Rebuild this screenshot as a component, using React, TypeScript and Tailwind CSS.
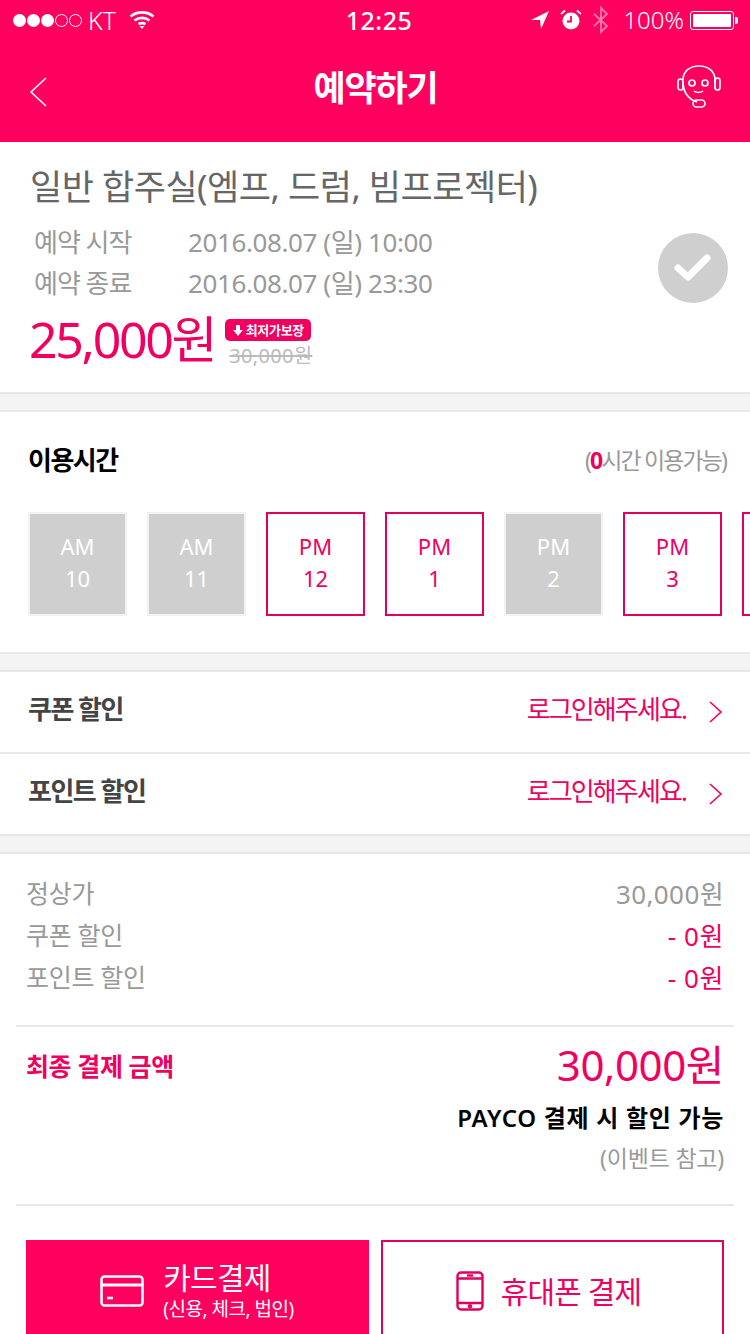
const slots = [
  { top: "AM", num: "10", on: false },
  { top: "AM", num: "11", on: false },
  { top: "PM", num: "12", on: true },
  { top: "PM", num: "1", on: true },
  { top: "PM", num: "2", on: false },
  { top: "PM", num: "3", on: true },
  { top: "", num: "", on: true },
];

const Divider = () => (
  <div className="h-[20px] shrink-0 bg-[#f4f4f4] border-y-2 border-[#e8e8e8]" />
);

const DiscountRow = ({ label }: { label: string }) => (
  <div className="flex h-[80px] items-center justify-between pl-[28px] pr-[27px]">
    <span className="mb-[5px] text-[26px] font-bold tracking-[-1.5px] text-[#444]">{label}</span>
    <div className="flex items-center gap-[22px]">
      <span className="mb-[5px] text-[26px] tracking-[-1.9px] text-[#f0005f]">로그인해주세요.</span>
      <svg width="15" height="22" viewBox="0 0 15 22" fill="none" stroke="#f0005f" strokeWidth="1.6">
        <path d="M2 1L13 11L2 21" />
      </svg>
    </div>
  </div>
);

const PriceRow = ({ label, value, pink }: { label: string; value: string; pink?: boolean }) => (
  <div className="flex h-[42px] items-center justify-between">
    <span className="text-[25px] tracking-[-0.3px] text-[#999]">{label}</span>
    <span className={pink ? "text-[26px] tracking-[0.6px] text-[#f0005f]" : "text-[26px] tracking-[0.4px] text-[#999]"}>{value}</span>
  </div>
);

export default function App() {
  return (
    <div
      className="h-[1334px] w-[750px] overflow-hidden bg-white"
      style={{ fontFamily: '"Noto Sans", "Noto Sans CJK KR", sans-serif' }}
    >
      {/* Header */}
      <div className="h-[142px] bg-[#ff005f] text-white">
        <div className="flex h-[40px] items-center justify-between pl-[13px] pr-[9px]">
          <div className="flex w-[300px] items-center">
            <div className="flex items-center gap-[1px]">
              <span className="size-[13px] rounded-full bg-white" />
              <span className="size-[13px] rounded-full bg-white" />
              <span className="size-[13px] rounded-full bg-white" />
              <span className="size-[13px] rounded-full border border-white" />
              <span className="size-[13px] rounded-full border border-white" />
            </div>
            <span className="ml-[6px] text-[25px] font-light leading-none">KT</span>
            <svg width="26" height="20" viewBox="0 0 26 20" className="ml-[13px]" fill="none" stroke="white" strokeWidth="2.6">
              <path d="M1.5 6.5C8 1 18 1 24.5 6.5" />
              <path d="M5.5 10.5C10 7 16 7 20.5 10.5" />
              <path d="M9.5 14C11.5 13 14.5 13 16.5 14" />
              <path d="M10.5 16L13 19L15.5 16Z" fill="white" stroke="none" />
            </svg>
          </div>
          <span className="ml-[4px] text-[25px] font-medium leading-none tracking-[0.5px]">12:25</span>
          <div className="flex w-[300px] items-center justify-end pr-[3px]">
            <svg width="18" height="18" viewBox="0 0 18 18" fill="white">
              <path d="M0 9L18 0L10 18L9 9Z" />
            </svg>
            <svg width="22" height="22" viewBox="0 0 22 22" className="ml-[11px]">
              <circle cx="11" cy="12" r="8.5" fill="white" />
              <path d="M11 7V12.5H7" stroke="#ff005f" strokeWidth="1.8" fill="none" />
              <path d="M1 5L5 1.5M21 5L17 1.5" stroke="white" strokeWidth="1.8" />
            </svg>
            <svg width="16" height="28" viewBox="0 0 16 28" className="ml-[11px]" fill="none" stroke="white" strokeOpacity="0.45" strokeWidth="2">
              <path d="M1 8L14 20L8 26V2L14 8L1 20" />
            </svg>
            <span className="ml-[14px] text-[24px] font-light leading-none">100%</span>
            <div className="ml-[6px] flex items-center">
              <div className="h-[19px] w-[44px] rounded-[3px] border border-white p-[2px]">
                <div className="h-full w-full rounded-[1px] bg-white" />
              </div>
              <div className="ml-[1px] h-[7px] w-[3px] rounded-r-[2px] bg-white" />
            </div>
          </div>
        </div>
        <div className="flex h-[102px] items-center pl-[29px] pr-[28px]">
          <div className="flex-1">
            <svg width="18" height="30" viewBox="0 0 18 30" fill="none" stroke="white" strokeWidth="1.6" className="mt-[2px]">
              <path d="M17 1L2 15L17 29" />
            </svg>
          </div>
          <span className="mb-[8px] text-[35px] font-bold leading-none tracking-[-1.2px]">예약하기</span>
          <div className="flex flex-1 justify-end">
            <svg width="46" height="44" viewBox="0 0 46 44" fill="none" stroke="white" strokeWidth="1.7" className="mb-[9px]">
              <path d="M7 15C7 6 14 1 23 1C32 1 39 6 39 15V24" />
              <path d="M7 16C7 28 12 34 21 37" />
              <rect x="2" y="14" width="5" height="11" rx="2.5" />
              <rect x="39" y="13" width="5" height="12" rx="2.5" />
              <circle cx="16" cy="18" r="3" />
              <circle cx="29" cy="18" r="3" />
              <path d="M18 26C20 28 25 28 27 26" />
              <rect x="17" y="35" width="12" height="7" rx="3.5" />
            </svg>
          </div>
        </div>
      </div>

      {/* Room info */}
      <div className="relative h-[250px] px-[30px] pt-[22px]">
        <h1 className="text-[35px] font-normal leading-[46px] tracking-[-0.5px] text-[#666]">
          일반 합주실(엠프, 드럼, 빔프로젝터)
        </h1>
        <div className="mt-[12px] flex h-[41px] items-center pl-[4px] text-[26px] text-[#999]">
          <span className="w-[154px] tracking-[-1px]">예약 시작</span>
          <span className="tracking-[-0.4px]">2016.08.07 (일) 10:00</span>
        </div>
        <div className="flex h-[41px] items-center pl-[4px] text-[26px] text-[#999]">
          <span className="w-[154px] tracking-[-1px]">예약 종료</span>
          <span className="tracking-[-0.4px]">2016.08.07 (일) 23:30</span>
        </div>
        <div className="mt-[5px] flex items-center">
          <span className="ml-[-1px] text-[50px] leading-[60px] tracking-[-2.3px] text-[#f0005f]">25,000원</span>
          <div className="ml-[10px] mt-[10px] flex flex-col items-start">
            <div className="flex h-[22px] w-[86px] items-center justify-center gap-[3px] rounded-[5px] bg-[#f0005f] text-white">
              <svg width="10" height="11" viewBox="0 0 10 11" fill="white">
                <path d="M3 0H7V5H10L5 11L0 5H3Z" />
              </svg>
              <span className="text-[13px] font-bold leading-none tracking-[-0.3px]">최저가보장</span>
            </div>
            <span className="ml-[4px] mt-[2px] text-[20px] leading-[26px] tracking-[0.3px] text-[#bbb] line-through">
              30,000원
            </span>
          </div>
        </div>
        <div className="absolute right-[22px] top-[91px] flex size-[70px] items-center justify-center rounded-full bg-[#cfcfcf]">
          <svg width="38" height="30" viewBox="0 0 38 30" fill="none" stroke="white" strokeWidth="7" strokeLinecap="round" strokeLinejoin="round">
            <path d="M4 15L14 24L33 5" />
          </svg>
        </div>
      </div>

      <Divider />

      {/* Usage time */}
      <div className="h-[240px] overflow-hidden pl-[28px]">
        <div className="flex h-[96px] items-center justify-between pr-[24px]">
          <span className="text-[26px] font-bold tracking-[-1.5px] text-black">이용시간</span>
          <span className="text-[23px] tracking-[-1.9px] text-[#999]">
            (<b className="text-[#f0005f]">0</b>시간 이용가능)
          </span>
        </div>
        <div className="mt-[4px] flex w-[800px] gap-[20px]">
          {slots.map((s, i) => (
            <div
              key={i}
              className={
                s.on
                  ? "flex h-[104px] w-[99px] shrink-0 flex-col items-center justify-center border-2 border-[#e2005f] pb-[4px] text-[22px] leading-[32px] text-[#f0005f]"
                  : "flex h-[104px] w-[99px] shrink-0 flex-col items-center justify-center border-2 border-[#f2f2f2] bg-[#cfcfcf] pb-[4px] text-[22px] leading-[32px] text-white"
              }
            >
              <span>{s.top}</span>
              <span>{s.num}</span>
            </div>
          ))}
        </div>
      </div>

      <Divider />

      {/* Discounts */}
      <DiscountRow label="쿠폰 할인" />
      <div className="h-[2px] bg-[#e8e8e8]" />
      <DiscountRow label="포인트 할인" />

      <Divider />

      {/* Price summary */}
      <div className="px-[16px]">
        <div className="border-b-2 border-[#e8e8e8] px-[10px] pb-[26px] pt-[19px]">
          <PriceRow label="정상가" value="30,000원" />
          <PriceRow label="쿠폰 할인" value="- 0원" pink />
          <PriceRow label="포인트 할인" value="- 0원" pink />
        </div>
        <div className="flex h-[179px] justify-between border-b-2 border-[#e8e8e8] px-[10px]">
          <span className="mt-[21px] text-[25px] font-bold leading-[36px] tracking-[-0.4px] text-[#f0005f]">
            최종 결제 금액
          </span>
          <div className="flex flex-col items-end">
            <span className="mt-[12px] text-[42px] leading-[52px] tracking-[-0.4px] text-[#f0005f]">30,000원</span>
            <span className="mt-[9px] text-[24px] font-semibold leading-[36px] tracking-[0.7px] text-black">
              PAYCO 결제 시 할인 가능
            </span>
            <span className="mt-[4px] text-[23px] leading-[36px] tracking-[-0.2px] text-[#999]">(이벤트 참고)</span>
          </div>
        </div>
      </div>

      {/* Payment buttons */}
      <div className="mt-[34px] flex gap-[12px] px-[26px]">
        <div className="flex h-[110px] w-[343px] items-center justify-center gap-[19px] bg-[#ff005f] pb-[8px] pr-[1px] text-white">
          <svg width="44" height="32" viewBox="0 0 44 32" fill="none" stroke="white" strokeWidth="2.6">
            <rect x="1.5" y="1.5" width="41" height="29" rx="3" />
            <path d="M1.5 10H42.5" strokeWidth="3.2" />
            <path d="M7 23H13" strokeWidth="2.6" />
          </svg>
          <div className="flex flex-col">
            <span className="text-[30px] leading-[36px] tracking-[-0.8px]">카드결제</span>
            <span className="text-[19px] leading-[26px] tracking-[-0.5px]">(신용, 체크, 법인)</span>
          </div>
        </div>
        <div className="flex h-[110px] w-[343px] items-center justify-center gap-[17px] border-2 border-[#e2005f] pb-[8px] pr-[8px] text-[#f0005f]">
          <svg width="28" height="40" viewBox="0 0 28 40" fill="none" stroke="#e2005f" strokeWidth="2.4">
            <rect x="1.5" y="1.5" width="25" height="37" rx="3.5" />
            <path d="M1.5 7.5H26.5M1.5 32H26.5" />
            <path d="M11 4.5H17" />
            <circle cx="14" cy="35.3" r="1" />
          </svg>
          <span className="text-[30px] tracking-[-0.9px]">휴대폰 결제</span>
        </div>
      </div>
    </div>
  );
}
